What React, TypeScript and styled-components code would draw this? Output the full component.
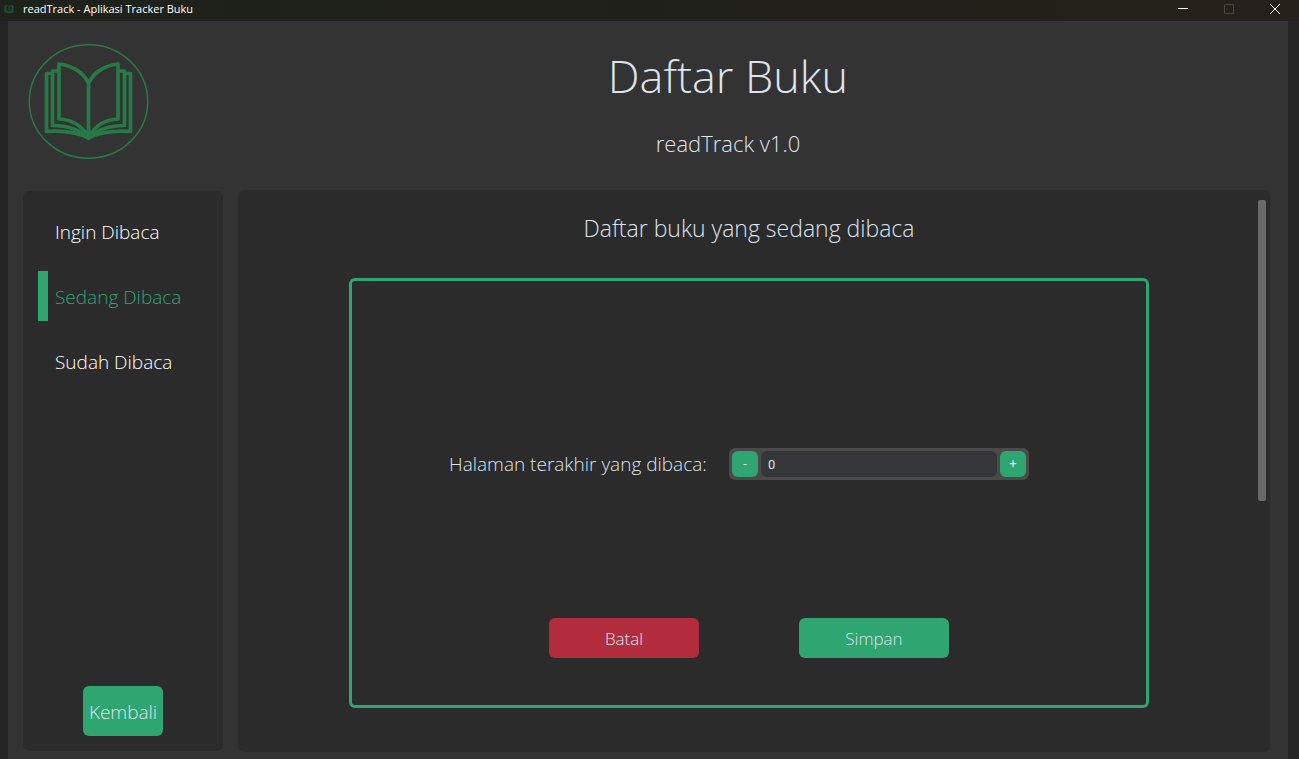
import React, { useState } from "react";
import styled, { createGlobalStyle } from "styled-components";

const green = "#2fa572";
const lightFont = '"Segoe UI Light", "Open Sans", "Noto Sans", sans-serif';
const uiFont = '"Segoe UI", "Open Sans", "Noto Sans", sans-serif';

const GlobalStyle = createGlobalStyle`
  *, *::before, *::after { box-sizing: border-box; }
  html, body, #root { height: 100%; }
  body {
    margin: 0;
    background: #242424;
    color: #dce4ee;
    font-family: ${lightFont};
    font-weight: 300;
    overflow: hidden;
  }
  button, input { font: inherit; color: inherit; border: 0; padding: 0; margin: 0; }
  button { cursor: pointer; }
  h1, h2, p { margin: 0; font-weight: 300; }
`;

const Window = styled.div`
  display: flex;
  flex-direction: column;
  height: 100%;
`;

const TitleBar = styled.header`
  display: flex;
  align-items: center;
  flex: none;
  height: 21px;
  padding: 0 1px 4px 4px;
  gap: 9px;
  background: linear-gradient(90deg, #1d221b, #21201a 60%, #26201b);
  color: #ffffff;
  font: 400 11px/16px ${uiFont};
`;

const WindowTitle = styled.span`
  flex: 1;
`;

const WindowButtons = styled.div`
  display: flex;
`;

const WindowButton = styled.button<{ $dim?: boolean }>`
  display: flex;
  align-items: center;
  justify-content: center;
  width: 46px;
  height: 17px;
  background: none;
  color: ${(p) => (p.$dim ? "#4b4742" : "#ffffff")};
`;

const Body = styled.main`
  display: flex;
  flex-direction: column;
  flex: 1;
  min-height: 0;
  margin: 0 11px 0 8px;
  padding: 22px 18px 7px 15px;
  background: #333333;
`;

const PageHeader = styled.div`
  display: flex;
  flex: none;
  height: 147px;
`;

const LogoBox = styled.div`
  width: 145px;
  padding-left: 5px;
`;

const Titles = styled.div`
  flex: 1;
  margin-right: -18px;
  text-align: center;
`;

const Title = styled.h1`
  font-size: 45px;
  line-height: 66px;
`;

const Version = styled.p`
  margin-top: 18px;
  font-size: 22px;
  line-height: 32px;
`;

const Columns = styled.div`
  display: flex;
  flex: 1;
  min-height: 0;
  gap: 15px;
`;

const Sidebar = styled.nav`
  display: flex;
  flex-direction: column;
  width: 200px;
  margin: 1px 0;
  padding: 15px;
  border-radius: 6px;
  background: #2b2b2b;
`;

const NavList = styled.div`
  display: flex;
  flex-direction: column;
  gap: 15px;
  flex: 1;
`;

const NavItem = styled.button<{ $active: boolean }>`
  height: 50px;
  padding: 2px 0 0 7px;
  border-left: 10px solid ${(p) => (p.$active ? green : "transparent")};
  background: none;
  color: ${(p) => (p.$active ? green : "#ffffff")};
  font-size: 19px;
  line-height: 26px;
  text-align: left;
`;

const ActionButton = styled.button<{ $danger?: boolean }>`
  width: 150px;
  height: 40px;
  padding-top: 2px;
  border-radius: 6px;
  background: ${(p) => (p.$danger ? "#b32c3e" : green)};
  font-size: 17px;
  line-height: 24px;
`;

const BackButton = styled(ActionButton)`
  align-self: center;
  width: 80px;
  height: 50px;
  font-size: 19px;
`;

const Panel = styled.section`
  display: flex;
  flex: 1;
  min-width: 0;
  padding: 10px 4px 10px 0;
  border-radius: 6px;
  background: #2b2b2b;
`;

const PanelContent = styled.div`
  display: flex;
  flex-direction: column;
  align-items: center;
  flex: 1;
  min-width: 0;
  padding: 12px 20px 0 22px;
`;

const ScrollThumb = styled.div`
  width: 8px;
  height: 301px;
  border-radius: 2px;
  background: #696969;
`;

const PanelTitle = styled.h2`
  font-size: 23px;
  line-height: 32px;
`;

const Card = styled.form`
  display: flex;
  flex-direction: column;
  justify-content: space-between;
  width: 100%;
  max-width: 800px;
  height: 430px;
  margin-top: 34px;
  padding: 167px 97px 47px;
  border: 3px solid ${green};
  border-radius: 6px;
`;

const PageRow = styled.div`
  display: flex;
  align-items: center;
`;

const PageLabel = styled.label`
  width: 280px;
  font-size: 19px;
  line-height: 26px;
  white-space: nowrap;
`;

const SpinBox = styled.div`
  display: flex;
  gap: 3px;
  width: 300px;
  height: 32px;
  padding: 3px;
  border-radius: 6px;
  background: #4a4a4a;
`;

const StepButton = styled.button`
  width: 26px;
  height: 26px;
  border-radius: 6px;
  background: ${green};
  font: 400 13px/18px Roboto, sans-serif;
`;

const PageInput = styled.input`
  flex: 1;
  min-width: 0;
  height: 26px;
  padding: 0 7px;
  border-radius: 6px;
  background: #343638;
  font: 400 13px/18px Roboto, sans-serif;
`;

const Actions = styled.div`
  display: flex;
  justify-content: center;
  gap: 100px;
`;

const BookPages = () => (
  <>
    <path d="M88.5 83.5C84 73 73 65.500 59 64V119C72 119.500 82 126 88.500 137C95 126 105 119.500 118 119V64C104 65.500 93 73 88.500 83.500V137" />
    <path d="M59 71H52.500V125.500C66 125.500 79 129 88.500 138C98 129 111 125.500 124.500 125.500V71H118" />
    <path d="M52.500 73.500H46.500V131.500C62 130.500 77 132 88.500 138C100 132 115 130.500 130.500 131.500V73.500H124.500" />
  </>
);

const Logo = () => (
  <svg width="121" height="116" viewBox="28 43 121 116" fill="none" stroke="#267a45" role="img" aria-label="readTrack">
    <ellipse cx="88.500" cy="101.500" rx="59.200" ry="56.700" strokeWidth="1.500" />
    <g strokeWidth="3.700" strokeLinejoin="round">
      <BookPages />
    </g>
  </svg>
);

const AppIcon = () => (
  <svg width="10" height="10" viewBox="40 57 97 88" fill="none" stroke="#1d5836" strokeWidth="8" aria-hidden="true">
    <BookPages />
  </svg>
);

const shelves = ["Ingin Dibaca", "Sedang Dibaca", "Sudah Dibaca"];

export default function App() {
  const [shelf, setShelf] = useState(1);
  const [page, setPage] = useState("0");
  const step = (by: number) => setPage(String(Math.max(0, (Number(page) || 0) + by)));

  return (
    <Window>
      <GlobalStyle />
      <TitleBar>
        <AppIcon />
        <WindowTitle>readTrack - Aplikasi Tracker Buku</WindowTitle>
        <WindowButtons>
          <WindowButton aria-label="Minimize">
            <svg width="10" height="10" stroke="currentColor"><path d="M0 4.500H10" /></svg>
          </WindowButton>
          <WindowButton $dim aria-label="Maximize">
            <svg width="10" height="10" stroke="currentColor" fill="none"><rect x="0.500" y="0.500" width="9" height="9" rx="0.500" /></svg>
          </WindowButton>
          <WindowButton aria-label="Close">
            <svg width="10" height="10" stroke="currentColor"><path d="M0 0L10 10M10 0L0 10" /></svg>
          </WindowButton>
        </WindowButtons>
      </TitleBar>
      <Body>
        <PageHeader>
          <LogoBox>
            <Logo />
          </LogoBox>
          <Titles>
            <Title>Daftar Buku</Title>
            <Version>readTrack v1.0</Version>
          </Titles>
        </PageHeader>
        <Columns>
          <Sidebar>
            <NavList>
              {shelves.map((name, i) => (
                <NavItem key={name} $active={i === shelf} onClick={() => setShelf(i)}>
                  {name}
                </NavItem>
              ))}
            </NavList>
            <BackButton>Kembali</BackButton>
          </Sidebar>
          <Panel>
            <PanelContent>
              <PanelTitle>Daftar buku yang sedang dibaca</PanelTitle>
              <Card onSubmit={(e) => e.preventDefault()}>
                <PageRow>
                  <PageLabel htmlFor="last-page">Halaman terakhir yang dibaca:</PageLabel>
                  <SpinBox>
                    <StepButton type="button" onClick={() => step(-1)}>-</StepButton>
                    <PageInput id="last-page" value={page} onChange={(e) => setPage(e.target.value)} />
                    <StepButton type="button" onClick={() => step(1)}>+</StepButton>
                  </SpinBox>
                </PageRow>
                <Actions>
                  <ActionButton type="button" $danger>Batal</ActionButton>
                  <ActionButton type="submit">Simpan</ActionButton>
                </Actions>
              </Card>
            </PanelContent>
            <ScrollThumb />
          </Panel>
        </Columns>
      </Body>
    </Window>
  );
}
